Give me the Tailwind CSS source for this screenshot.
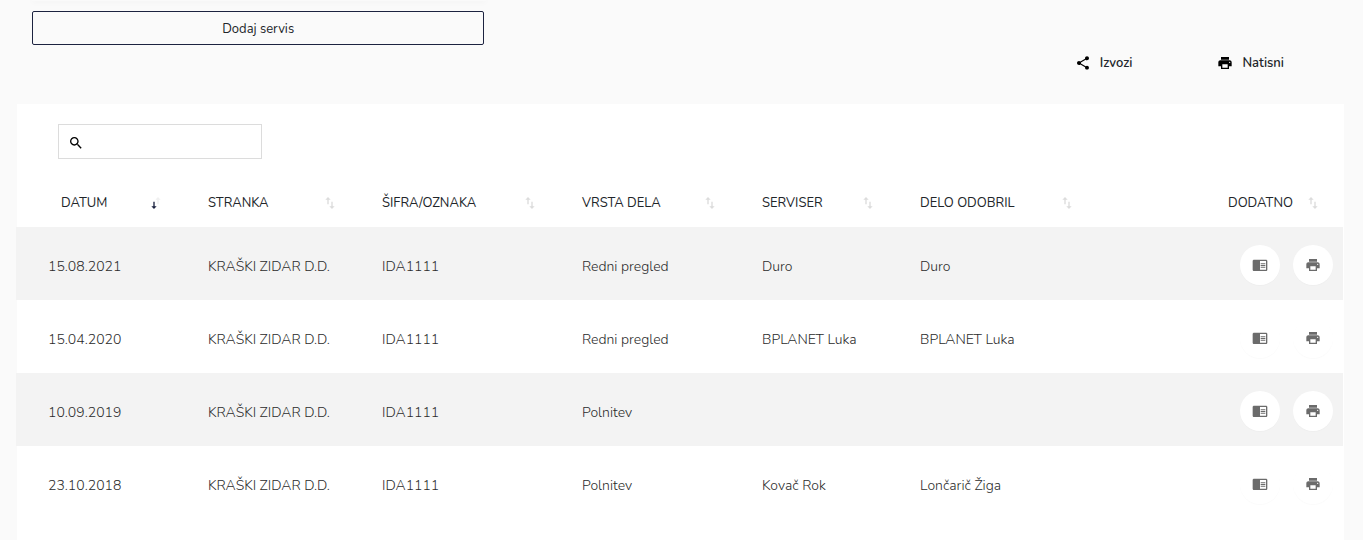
<!DOCTYPE html>
<html lang="sl">
<head>
<meta charset="utf-8">
<title>Servisi</title>
<script src="https://cdn.jsdelivr.net/npm/@tailwindcss/browser@4"></script>
</head>
<body class="min-h-screen flex flex-col bg-[#fafafa] font-['Nunito','Open_Sans',sans-serif] text-sm text-[#212529] overflow-x-hidden">
<svg class="hidden" aria-hidden="true">
  <symbol id="share" viewBox="0 0 24 24"><path d="M18 16.08c-.76 0-1.44.3-1.96.77L8.91 12.7c.05-.23.09-.46.09-.7s-.04-.47-.09-.7l7.05-4.11c.54.5 1.25.81 2.04.81 1.66 0 3-1.34 3-3s-1.34-3-3-3-3 1.34-3 3c0 .24.04.47.09.7L8.04 9.81C7.5 9.31 6.79 9 6 9c-1.66 0-3 1.34-3 3s1.34 3 3 3c.79 0 1.5-.31 2.04-.81l7.12 4.16c-.05.21-.08.43-.08.65 0 1.61 1.31 2.92 2.92 2.92s2.92-1.31 2.92-2.92-1.31-2.92-2.92-2.92z"/></symbol>
  <symbol id="print" viewBox="0 0 24 24"><path d="M19 8H5c-1.66 0-3 1.34-3 3v6h4v4h12v-4h4v-6c0-1.66-1.34-3-3-3zm-3 11H8v-5h8v5zm3-7c-.55 0-1-.45-1-1s.45-1 1-1 1 .45 1 1-.45 1-1 1zm-1-9H6v4h12V3z"/></symbol>
  <symbol id="search" viewBox="0 0 24 24"><path d="M15.5 14h-.79l-.28-.27C15.41 12.59 16 11.11 16 9.5 16 5.91 13.09 3 9.5 3S3 5.91 3 9.5 5.91 16 9.5 16c1.61 0 3.09-.59 4.23-1.57l.27.28v.79l5 4.99L20.49 19l-4.99-5zm-6 0C7.01 14 5 11.99 5 9.5S7.01 5 9.5 5 14 7.01 14 9.5 11.99 14 9.5 14z"/></symbol>
  <symbol id="reader" viewBox="0 0 24 24"><path d="M13 12h7v1.5h-7zm0-2.5h7V11h-7zm0 5h7V16h-7zM21 4H3c-1.1 0-2 .9-2 2v13c0 1.1.9 2 2 2h18c1.1 0 2-.9 2-2V6c0-1.1-.9-2-2-2zm0 15h-9V6h9v13z"/></symbol>
  <symbol id="sort" viewBox="0 0 24 24"><path d="M9 3L5 7h3v7h2V7h3L9 3zm7 14v-7h-2v7h-3l4 4 4-4h-3z"/></symbol>
  <symbol id="sorted" viewBox="0 0 24 24"><path fill="#f0f0f0" d="M15 3l-4 4h3v7h2V7h3l-4-4z"/><path fill="#1c2340" d="M10 17v-7H8v7H5l4 4 4-4h-3z"/></symbol>
</svg>

<header class="h-26 shrink-0">
  <div class="mx-8 w-1/3 h-px shadow-[0_0_6px_rgba(0,0,0,0.12)]"></div>
  <div class="pt-[10px] px-8">
    <button type="button" class="block w-[calc(33.333vw-2px)] h-[34px] pt-[2px] rounded-xs border border-[#1c2340] text-[13px]">Dodaj servis</button>
  </div>
  <div class="flex justify-end pr-[79px] mt-2 gap-[85px] text-[13px] font-semibold">
    <button type="button" class="flex items-center gap-[9px] h-5"><svg class="size-4 fill-black"><use href="#share"/></svg>Izvozi</button>
    <button type="button" class="flex items-center gap-[9px] h-5"><svg class="size-4 fill-black"><use href="#print"/></svg>Natisni</button>
  </div>
</header>

<main class="grow bg-white ml-[17px] mr-[19px] pt-5">
  <label class="ml-[41px] flex items-center w-51 h-[35px] border border-[#dcdcdc] pl-[9px] pt-[2px]">
    <svg class="size-4 shrink-0 fill-black"><use href="#search"/></svg>
    <input type="search" aria-label="Iskanje" class="w-full min-w-0 px-2 outline-none">
  </label>
  <div class="-ml-px mr-px mt-[18px]">
    <table class="w-full table-fixed text-left">
      <colgroup><col class="w-[192px]"><col class="w-[174px]"><col class="w-[200px]"><col class="w-[180px]"><col class="w-[158px]"><col class="w-[199px]"><col class="w-[224px]"></colgroup>
      <thead>
        <tr class="h-[50px] text-[13px] whitespace-nowrap">
          <th class="pt-[2px] pl-[45px] pr-[44px] font-normal"><button type="button" class="flex w-full items-center justify-between">DATUM<svg class="size-4"><use href="#sorted"/></svg></button></th>
          <th class="pt-[2px] pr-[44px] font-normal"><button type="button" class="flex w-full items-center justify-between">STRANKA<svg class="size-4 fill-[#dcdcdc]"><use href="#sort"/></svg></button></th>
          <th class="pt-[2px] pr-[44px] font-normal"><button type="button" class="flex w-full items-center justify-between">ŠIFRA/OZNAKA<svg class="size-4 fill-[#dcdcdc]"><use href="#sort"/></svg></button></th>
          <th class="pt-[2px] pr-[44px] font-normal"><button type="button" class="flex w-full items-center justify-between">VRSTA DELA<svg class="size-4 fill-[#dcdcdc]"><use href="#sort"/></svg></button></th>
          <th class="pt-[2px] pr-[44px] font-normal"><button type="button" class="flex w-full items-center justify-between">SERVISER<svg class="size-4 fill-[#dcdcdc]"><use href="#sort"/></svg></button></th>
          <th class="pt-[2px] pr-[44px] font-normal"><button type="button" class="flex w-full items-center justify-between">DELO ODOBRIL<svg class="size-4 fill-[#dcdcdc]"><use href="#sort"/></svg></button></th>
          <th class="pt-[2px] pr-[22px] font-normal"><button type="button" class="flex w-full items-center justify-end gap-3">DODATNO<svg class="size-4 fill-[#dcdcdc]"><use href="#sort"/></svg></button></th>
        </tr>
      </thead>
      <tbody id="rows" class="text-[#2b2b2b] font-light"></tbody>
    </table>
  </div>
</main>

<script>
  const client = 'KRAŠKI ZIDAR D.D.';
  const data = [
    ['15.08.2021', client, 'IDA1111', 'Redni pregled', 'Duro', 'Duro'],
    ['15.04.2020', client, 'IDA1111', 'Redni pregled', 'BPLANET Luka', 'BPLANET Luka'],
    ['10.09.2019', client, 'IDA1111', 'Polnitev', '', ''],
    ['23.10.2018', client, 'IDA1111', 'Polnitev', 'Kovač Rok', 'Lončarič Žiga']
  ];
  const action = (icon, label) =>
    `<button type="button" aria-label="${label}" class="size-10 rounded-full bg-white shadow-[0_1px_1px_rgba(0,0,0,0.02)] flex items-center justify-center"><svg class="size-4 fill-[#6b6b6b]"><use href="#${icon}"/></svg></button>`;
  document.getElementById('rows').innerHTML = data.map(row =>
    `<tr class="h-[73px] odd:bg-[#f3f3f3] whitespace-nowrap">${row.map(c => `<td class="pt-[6px] first:pl-8">${c}</td>`).join('')}
      <td class="pt-[3px] pr-[10px]"><div class="flex justify-end gap-[13px]">${action('reader', 'Podrobnosti')}${action('print', 'Natisni')}</div></td></tr>`).join('');
</script>
</body>
</html>
